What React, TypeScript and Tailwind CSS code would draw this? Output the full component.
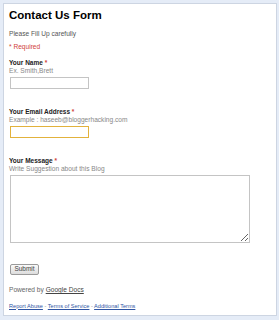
const App = () => {
  return (
    <div className="w-[279px] h-[320px] bg-[#e5ecf7] pt-[3px] pl-[3px] font-['Liberation_Sans',Arial,sans-serif]">
      <div className="w-[274px] h-[313px] bg-white border border-[#cdd5e2] pl-[5px] pt-[6px] leading-none">
        <h1 className="text-[11.5px] font-bold text-black leading-none">Contact Us Form</h1>
        <p className="mt-[9px] text-[#555] text-[6.6px]">Please Fill Up carefully</p>
        <p className="mt-[7px] text-[#d0423a] text-[6.6px]">* Required</p>

        <div className="mt-[9px]">
          <div className="font-bold text-[#222] text-[6.5px]">
            Your Name <span className="text-[#d0423a]">*</span>
          </div>
          <div className="mt-[2px] text-[#888] text-[6.6px]">Ex. Smith,Brett</div>
          <input className="mt-[2px] ml-[1px] block w-[79px] h-[12px] border border-[#c4c4c4] outline-none" />
        </div>

        <div className="mt-[20px]">
          <div className="font-bold text-[#222] text-[6.5px]">
            Your Email Address <span className="text-[#d0423a]">*</span>
          </div>
          <div className="mt-[2px] text-[#888] text-[6.6px]">Example : haseeb@bloggerhacking.com</div>
          <input className="mt-[2px] ml-[1px] block w-[79px] h-[12px] border border-[#e2b23c] outline-none" />
        </div>

        <div className="mt-[20px]">
          <div className="font-bold text-[#222] text-[6.5px]">
            Your Message <span className="text-[#d0423a]">*</span>
          </div>
          <div className="mt-[2px] text-[#888] text-[6.6px]">Write Suggestion about this Blog</div>
          <textarea className="mt-[2px] ml-[1px] block w-[240px] h-[68px] border border-[#c4c4c4] outline-none" />
        </div>

        <button className="mt-[21px] ml-[1px] block w-[29px] h-[11px] border border-[#9a9a9a] rounded-[2px] bg-gradient-to-b from-[#fbfbfb] to-[#dcdcdc] text-[6.5px] text-[#444] leading-none">
          Submit
        </button>

        <p className="mt-[12px] text-[#666] text-[6.6px]">
          Powered by <span className="underline text-[#444]">Google Docs</span>
        </p>
        <p className="mt-[10px] text-[5.6px] text-[#888]">
          <span className="underline text-[#2f55a4]">Report Abuse</span> -{' '}
          <span className="underline text-[#2f55a4]">Terms of Service</span> -{' '}
          <span className="underline text-[#2f55a4]">Additional Terms</span>
        </p>
      </div>
    </div>
  );
};

export default App;
